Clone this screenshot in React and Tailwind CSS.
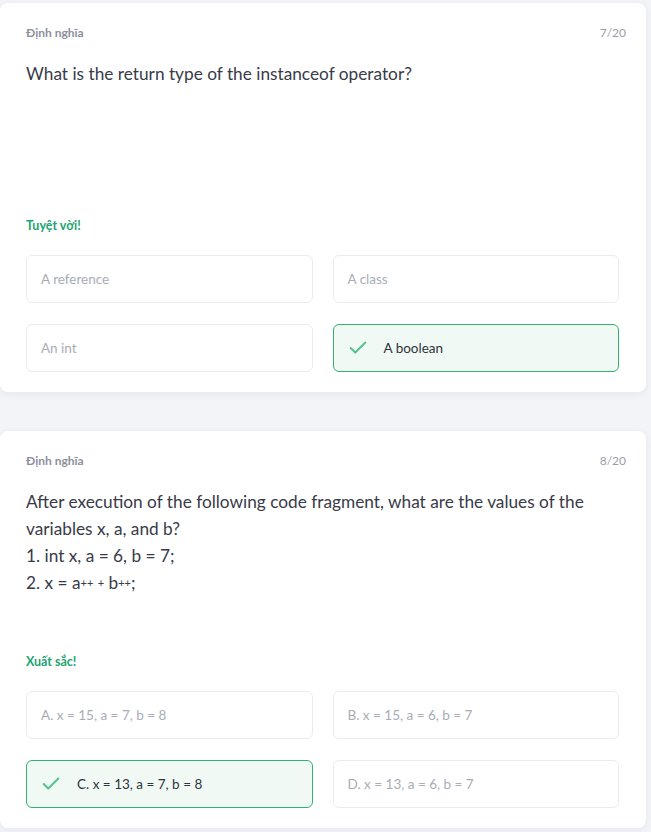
import { Check } from 'lucide-react'

const questions = [
    {
        category: 'Định nghĩa',
        progress: '7/20',
        lines: ['What is the return type of the instanceof operator?'],
        praise: 'Tuyệt vời!',
        options: ['A reference', 'A class', 'An int', 'A boolean'],
        correct: 3
    },
    {
        category: 'Định nghĩa',
        progress: '8/20',
        lines: [
            'After execution of the following code fragment, what are the values of the variables x, a, and b?',
            '1. int x, a = 6, b = 7;',
            <>2. x = a<span className="relative -top-[2px] text-[11px]">++</span> <span className="relative -top-[2px] text-[11px]">+</span> b<span className="relative -top-[2px] text-[11px]">++</span>;</>
        ],
        praise: 'Xuất sắc!',
        options: ['A. x = 15, a = 7, b = 8', 'B. x = 15, a = 6, b = 7', 'C. x = 13, a = 7, b = 8', 'D. x = 13, a = 6, b = 7'],
        correct: 2
    }
]

function Option({ label, selected }) {
    if (selected) {
        return (
            <div className="h-[48px] flex items-center rounded-md border border-[#2fb36f] bg-[#f1f9f4] pl-[13px]">
                <Check className="w-[22px] h-[22px] text-[#55c48d]" strokeWidth={2.2} />
                <span className="ml-[15px] text-[13.5px] text-[#2f3340]">{label}</span>
            </div>
        )
    }
    return (
        <div className="h-[48px] flex items-center rounded-md border border-[#ebecf0] bg-white pl-[14px]">
            <span className="text-[13.5px] text-[#a9acb6]">{label}</span>
        </div>
    )
}

function QuestionCard({ q }) {
    return (
        <div className="w-[646px] bg-white rounded-lg shadow-[0_2px_8px_rgba(30,40,70,0.06)] pl-[26px] pr-[27px] pt-[22px] pb-[20px]">
            <div className="flex items-center justify-between mr-[-7px] text-[12px] leading-[16px]">
                <span className="font-bold text-[#8c909c]">{q.category}</span>
                <span className="text-[#9a9da8]">{q.progress}</span>
            </div>
            <div className="mt-[19px] min-h-[102px] text-[17.25px] leading-[27px] text-[#383b48]">
                {q.lines.map((line, i) => (
                    <p key={i}>{line}</p>
                ))}
            </div>
            <div className="mt-[56px] text-[12.5px] leading-[16px] font-bold text-[#22a470]">{q.praise}</div>
            <div className="mt-[21px] grid grid-cols-2 gap-x-[20px] gap-y-[21px]">
                {q.options.map((opt, i) => (
                    <Option key={i} label={opt} selected={i === q.correct} />
                ))}
            </div>
        </div>
    )
}

export default function App() {
    return (
        <div className="min-h-[832px] bg-[#f3f4f8] pt-[3px] flex flex-col gap-[39px] font-['Lato','Open_Sans',sans-serif]">
            {questions.map((q, i) => (
                <QuestionCard key={i} q={q} />
            ))}
        </div>
    )
}
